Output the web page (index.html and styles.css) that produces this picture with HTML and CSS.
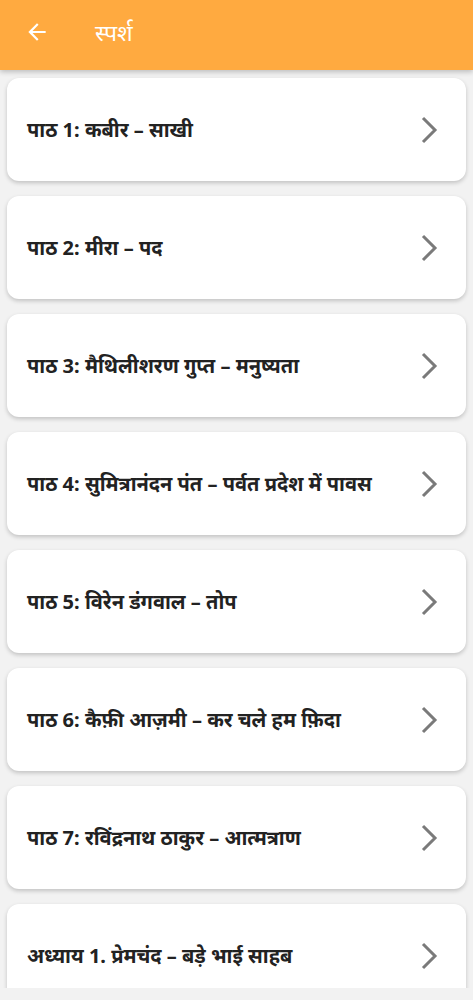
FILE: index.html
```html
<!DOCTYPE html>
<html lang="hi">
<head>
<meta charset="utf-8">
<link rel="stylesheet" href="styles.css">
</head>
<body>
<div class="app">
  <header class="bar">
    <svg class="back" viewBox="0 0 24 24" width="26" height="26"><path d="M20 11H7.83l5.59-5.59L12 4l-8 8 8 8 1.41-1.41L7.83 13H20v-2z" fill="#fff"/></svg>
    <span class="title">स्पर्श</span>
  </header>
  <main class="list">
    <div class="card"><span class="label">पाठ 1: कबीर – साखी</span><svg class="chev" viewBox="0 0 18 28" width="18" height="28"><path d="M3 2l12 12L3 26" fill="none" stroke="#7a7a7a" stroke-width="3"/></svg></div>
    <div class="card"><span class="label">पाठ 2: मीरा – पद</span><svg class="chev" viewBox="0 0 18 28" width="18" height="28"><path d="M3 2l12 12L3 26" fill="none" stroke="#7a7a7a" stroke-width="3"/></svg></div>
    <div class="card"><span class="label">पाठ 3: मैथिलीशरण गुप्त – मनुष्यता</span><svg class="chev" viewBox="0 0 18 28" width="18" height="28"><path d="M3 2l12 12L3 26" fill="none" stroke="#7a7a7a" stroke-width="3"/></svg></div>
    <div class="card"><span class="label">पाठ 4: सुमित्रानंदन पंत – पर्वत प्रदेश में पावस</span><svg class="chev" viewBox="0 0 18 28" width="18" height="28"><path d="M3 2l12 12L3 26" fill="none" stroke="#7a7a7a" stroke-width="3"/></svg></div>
    <div class="card"><span class="label">पाठ 5: विरेन डंगवाल – तोप</span><svg class="chev" viewBox="0 0 18 28" width="18" height="28"><path d="M3 2l12 12L3 26" fill="none" stroke="#7a7a7a" stroke-width="3"/></svg></div>
    <div class="card"><span class="label">पाठ 6: कैफ़ी आज़मी – कर चले हम फ़िदा</span><svg class="chev" viewBox="0 0 18 28" width="18" height="28"><path d="M3 2l12 12L3 26" fill="none" stroke="#7a7a7a" stroke-width="3"/></svg></div>
    <div class="card"><span class="label">पाठ 7: रविंद्रनाथ ठाकुर – आत्मत्राण</span><svg class="chev" viewBox="0 0 18 28" width="18" height="28"><path d="M3 2l12 12L3 26" fill="none" stroke="#7a7a7a" stroke-width="3"/></svg></div>
    <div class="card"><span class="label">अध्याय 1. प्रेमचंद – बड़े भाई साहब</span><svg class="chev" viewBox="0 0 18 28" width="18" height="28"><path d="M3 2l12 12L3 26" fill="none" stroke="#7a7a7a" stroke-width="3"/></svg></div>
  </main>
</div>
</body>
</html>
```
FILE: styles.css
```css
* { box-sizing: border-box; }
html, body { margin: 0; padding: 0; }
body {
  background: #f2f2f2;
  font-family: "Noto Sans", "Noto Sans Devanagari", "Lohit Devanagari", sans-serif;
  width: 473px;
  height: 1000px;
  overflow: hidden;
}
.app { display: flex; flex-direction: column; height: 988px; }
.bar {
  position: relative;
  z-index: 2;
  height: 70px;
  flex: none;
  background: #ffaa40;
  display: flex;
  align-items: center;
  padding-left: 24px;
  box-shadow: 0 2px 5px rgba(0,0,0,0.22);
}
.back { margin-top: -6px; }
.title {
  color: #fff;
  font-size: 23px;
  margin-left: 45px;
  margin-top: -7px;
}
.list {
  flex: 1;
  overflow: hidden;
  display: flex;
  flex-direction: column;
  gap: 15px;
  padding: 8px 7px 0;
}
.card {
  flex: none;
  height: 103px;
  background: #fff;
  border-radius: 12px;
  box-shadow: 0 2px 4px rgba(0,0,0,0.2);
  display: flex;
  align-items: center;
  justify-content: space-between;
  padding: 0 28px 0 20px;
}
.label {
  font-size: 20px;
  font-weight: 700;
  color: #222;
}
.chev { flex: none; }
```
